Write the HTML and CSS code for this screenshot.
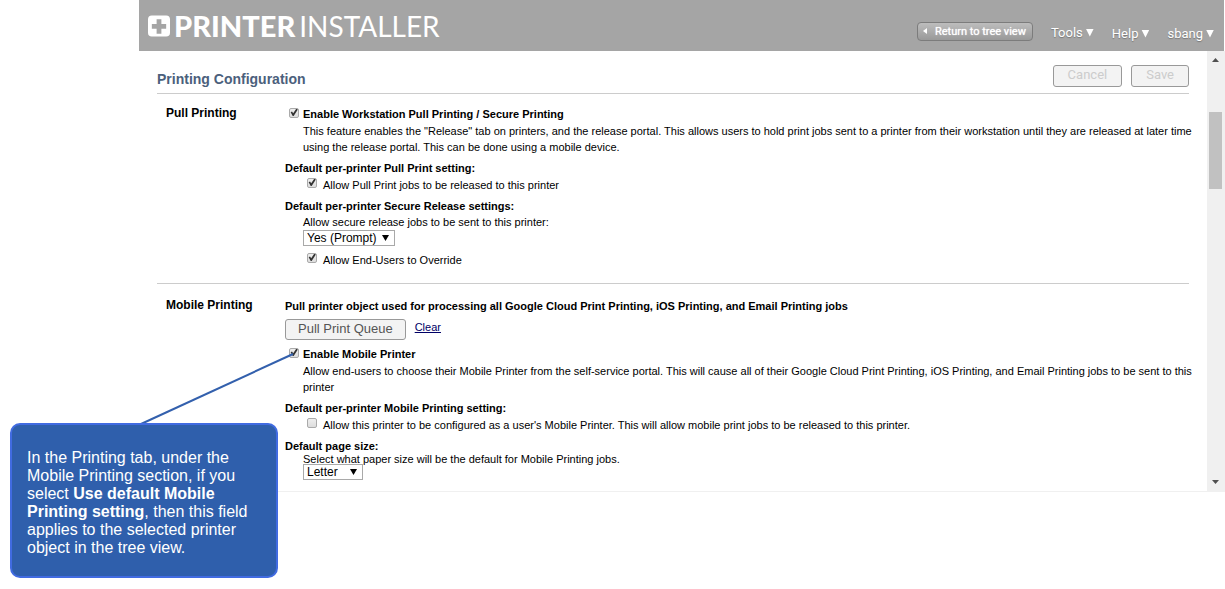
FILE: index.html
```html
<!DOCTYPE html>
<html lang="en">
<head>
<meta charset="utf-8">
<title>Printer Installer - Printing Configuration</title>
<link rel="stylesheet" href="styles.css">
</head>
<body>
<div class="app">
  <header class="topbar">
    <div class="logo">
      <svg class="logo-mark" viewBox="0 0 23 22" aria-hidden="true">
        <path fill="#fff" fill-rule="evenodd" d="M4 0H19Q23 0 23 4V18Q23 22 19 22H4Q0 22 0 18V4Q0 0 4 0ZM9 4V9H4V14H9V19H14V14H19V9H14V4Z"/>
      </svg>
      <span class="logo-bold">PRINTER</span><span class="logo-light">INSTALLER</span>
    </div>
    <nav class="menu">
      <button class="tree-button" type="button">Return to tree view</button>
      <button class="menu-item menu-tools" type="button">Tools <span class="caret"></span></button>
      <button class="menu-item" type="button">Help <span class="caret"></span></button>
      <button class="menu-item" type="button">sbang <span class="caret"></span></button>
    </nav>
  </header>
  <div class="body">
    <main class="content">
      <div class="title-row">
        <h1>Printing Configuration</h1>
        <div class="actions">
          <button class="button" type="button" disabled>Cancel</button>
          <button class="button" type="button" disabled>Save</button>
        </div>
      </div>

      <section class="section">
        <h2>Pull Printing</h2>
        <div class="fields">
          <div class="check-row strong"><input type="checkbox" id="pull" checked><label for="pull">Enable Workstation Pull Printing / Secure Printing</label></div>
          <p class="note">This feature enables the "Release" tab on printers, and the release portal. This allows users to hold print jobs sent to a printer from their workstation until they are released at later time using the release portal. This can be done using a mobile device.</p>
          <h3>Default per-printer Pull Print setting:</h3>
          <div class="check-row nested"><input type="checkbox" id="allow" checked><label for="allow">Allow Pull Print jobs to be released to this printer</label></div>
          <h3>Default per-printer Secure Release settings:</h3>
          <label class="indent" for="secure">Allow secure release jobs to be sent to this printer:</label>
          <span class="select"><select id="secure"><option>Yes (Prompt)</option></select><span class="arrow"></span></span>
          <div class="check-row nested spaced"><input type="checkbox" id="override" checked><label for="override">Allow End-Users to Override</label></div>
        </div>
      </section>

      <section class="section">
        <h2>Mobile Printing</h2>
        <div class="fields">
          <h3 class="lead">Pull printer object used for processing all Google Cloud Print Printing, iOS Printing, and Email Printing jobs</h3>
          <div class="queue-row"><button class="button" type="button">Pull Print Queue</button><a href="#">Clear</a></div>
          <div class="check-row strong"><input type="checkbox" id="mobile" checked><label for="mobile">Enable Mobile Printer</label></div>
          <p class="note">Allow end-users to choose their Mobile Printer from the self-service portal. This will cause all of their Google Cloud Print Printing, iOS Printing, and Email Printing jobs to be sent to this printer</p>
          <h3>Default per-printer Mobile Printing setting:</h3>
          <div class="check-row nested"><input type="checkbox" id="user"><label for="user">Allow this printer to be configured as a user's Mobile Printer. This will allow mobile print jobs to be released to this printer.</label></div>
          <h3>Default page size:</h3>
          <label class="indent tight" for="size">Select what paper size will be the default for Mobile Printing jobs.</label>
          <span class="select small"><select id="size"><option>Letter</option></select><span class="arrow"></span></span>
        </div>
      </section>
    </main>
    <div class="scrollbar" aria-hidden="true">
      <span class="scroll-up"></span>
      <span class="scroll-thumb"></span>
      <span class="scroll-down"></span>
    </div>
  </div>
</div>
<svg class="pointer" viewBox="0 0 160 76" aria-hidden="true"><path d="M4 73L156 3" stroke="#3360ad" stroke-width="2"/></svg>
<aside class="callout">In the Printing tab, under the Mobile Printing section, if you select <b>Use default Mobile Printing setting</b>, then this field applies to the selected printer object in the tree view.</aside>
</body>
</html>
```
FILE: styles.css
```css
* { box-sizing: border-box; }

body {
  margin: 0;
  background: #fff;
  color: #000;
  font: 11px/16px "Liberation Sans", Arial, sans-serif;
}

h1, h2, h3, p { margin: 0; }
button, select { font-family: inherit; }

.app { margin-left: 139px; }

.topbar {
  display: flex;
  justify-content: space-between;
  height: 51px;
  margin-right: 1px;
  padding: 0 10px 0 9px;
  background: #a5a5a5;
  color: #fff;
}

.logo {
  display: flex;
  align-items: center;
  font: 29px/52px Lato, sans-serif;
}
.logo-mark { width: 22px; height: 22px; margin-right: 4px; }
.logo-bold { font-weight: 900; margin-right: 4px; }
.logo-light { font-size: 28px; font-weight: 400; }

.menu {
  display: flex;
  align-items: flex-start;
  gap: 18px;
  padding-top: 22px;
}
.tree-button {
  position: relative;
  height: 19px;
  padding: 0 6px 0 17px;
  border: 1px solid #7c7c7c;
  border-radius: 4px;
  background: linear-gradient(#bdbdbd, #999);
  color: #fff;
  font: 11px/17px Roboto, sans-serif;
  text-shadow: 0 0 1px #fff;
  white-space: nowrap;
}
.tree-button::before {
  content: "";
  position: absolute;
  left: 5px;
  top: 5px;
  border: 3px solid transparent;
  border-left-width: 0;
  border-right: 4px solid #fff;
}
.menu-item {
  display: flex;
  align-items: center;
  gap: 3px;
  margin-top: 3px;
  padding: 0;
  border: 0;
  background: none;
  color: #fff;
  font: 13px/17px Roboto, sans-serif;
  text-shadow: 0 1px 1px #777;
}
.menu-tools { margin-top: 2px; }
.caret {
  width: 8px;
  height: 8px;
  background: #fff;
  clip-path: polygon(0 0, 100% 0, 50% 100%);
}

.body {
  display: flex;
  border-bottom: 1px solid #f0f0f0;
}
.content { flex: 1; padding: 0 18px 11px; }

.title-row {
  display: flex;
  align-items: center;
  justify-content: space-between;
  height: 42px;
  padding-top: 8px;
}
h1 { color: #4b607c; font-size: 14px; line-height: 18px; padding-top: 5px; }
.actions { display: flex; gap: 9px; }

.button {
  height: 21px;
  padding: 0 12px 3px;
  border: 1px solid #999;
  border-radius: 3px;
  background: #f3f3f3;
  color: #555;
  font: 13px/17px "Liberation Sans", Arial, sans-serif;
}
.actions .button { height: 22px; padding: 0 14px 3px; font-family: Roboto, sans-serif; }
.button:disabled { color: #ccc; }

.section {
  display: grid;
  grid-template-columns: 119px 1fr;
  padding: 12px 0 15px 9px;
  border-top: 1px solid #ccc;
}
.section + .section { padding-top: 14px; padding-bottom: 0; }
h2 { font-size: 12px; line-height: 16px; margin-top: -1px; }
.fields { display: flex; flex-direction: column; align-items: flex-start; }
h3 { font-size: 11px; line-height: 16px; margin-top: 5px; }
h3.lead { margin-top: 0; }

.check-row { display: flex; align-items: center; }
.check-row.strong { padding-left: 4px; font-weight: bold; }
.check-row.strong input { margin-right: 4px; }
.check-row.nested { padding-left: 22px; margin-top: 1px; }
.check-row.nested input { margin: -5px 6px 0 0; }
.check-row.spaced { margin-top: 6px; }

input[type="checkbox"] {
  appearance: none;
  width: 10px;
  height: 10px;
  margin: -3px 0 0;
  border: 1px solid #aaa;
  border-radius: 2px;
  background: linear-gradient(#eee, #ddd);
}
input[type="checkbox"]:checked::before {
  content: "";
  display: block;
  width: 8px;
  height: 8px;
  background: #333;
  clip-path: polygon(8% 48%, 25% 38%, 40% 58%, 78% 2%, 98% 14%, 46% 94%, 34% 94%);
}

.note { margin: 1px -9px 0 0; padding-left: 18px; }
.indent { padding-left: 18px; }
.tight { margin-top: -3px; }

.select { display: grid; margin-left: 18px; width: 92px; height: 16px; }
.select.small { width: 60px; margin-top: -3px; }
select, .arrow { grid-area: 1 / 1; }
select {
  appearance: none;
  width: 100%;
  height: 16px;
  padding: 0 3px;
  border: 1px solid #a9a9a9;
  border-radius: 0;
  background: #fff;
  color: #000;
  font-size: 12px;
  line-height: 14px;
}
.arrow {
  justify-self: end;
  align-self: center;
  width: 7px;
  height: 6px;
  margin-right: 6px;
  background: #000;
  clip-path: polygon(0 0, 100% 0, 50% 100%);
  pointer-events: none;
}

.queue-row { display: flex; gap: 9px; margin: 5px 0 6px; }
.queue-row a { color: #006; }

.scrollbar {
  display: flex;
  flex-direction: column;
  align-items: center;
  width: 18px;
  padding: 7px 1px 7px 0;
  background: #f0f0f0;
}
.scroll-up, .scroll-down {
  width: 7px;
  height: 4px;
  background: #505050;
  clip-path: polygon(50% 0, 100% 100%, 0 100%);
}
.scroll-down { margin-top: auto; clip-path: polygon(0 0, 100% 0, 50% 100%); }
.scroll-thumb { width: 13px; height: 77px; margin-top: 50px; background: #c1c1c1; }

.pointer {
  position: absolute;
  left: 137px;
  top: 351px;
  width: 160px;
  height: 76px;
}
.callout {
  position: absolute;
  left: 10px;
  top: 423px;
  width: 268px;
  padding: 24px 14px 19px 15px;
  border: 2px solid #416be1;
  border-radius: 10px;
  background: #2f5fac;
  color: #fff;
  font-size: 16px;
  line-height: 18px;
}
```
